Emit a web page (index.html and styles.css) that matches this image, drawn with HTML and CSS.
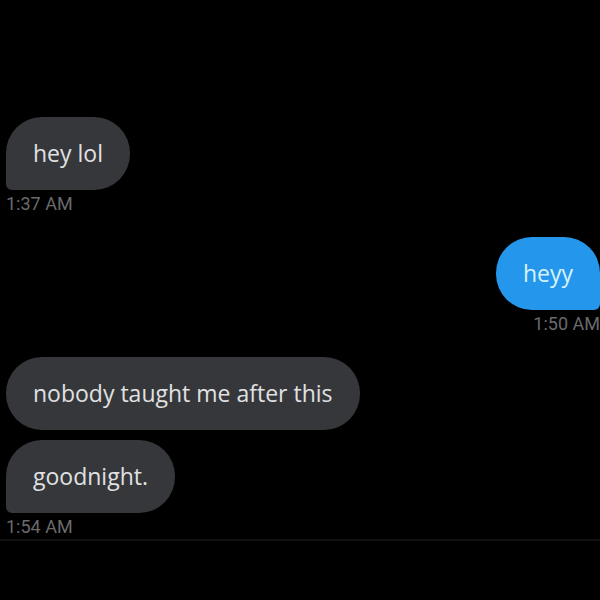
FILE: index.html
```html
<!DOCTYPE html>
<html lang="en">
<head>
<meta charset="utf-8">
<meta name="viewport" content="width=device-width, initial-scale=1">
<title>Messages</title>
<link rel="stylesheet" href="styles.css">
</head>
<body>
<main class="chat">
  <section class="group">
    <p class="bubble tail">hey lol</p>
    <time class="time">1:37 AM</time>
  </section>
  <section class="group sent">
    <p class="bubble tail">heyy</p>
    <time class="time">1:50 AM</time>
  </section>
  <section class="group">
    <p class="bubble">nobody taught me after this</p>
    <p class="bubble tail">goodnight.</p>
    <time class="time">1:54 AM</time>
  </section>
</main>
</body>
</html>
```

FILE: styles.css
```css
body {
  margin: 0;
  background: #000;
  color: #e0e1e3;
  font-family: "Open Sans", sans-serif;
}

.chat {
  display: flex;
  flex-direction: column;
  gap: 22px;
  padding: 117px 0 1px 6px;
  border-bottom: 2px solid #101010;
}

.group {
  display: flex;
  flex-direction: column;
  align-items: flex-start;
}

.sent {
  align-items: flex-end;
}

.bubble {
  margin: 0;
  padding: 20px 27px;
  border-radius: 36px;
  background: #36373a;
  font-size: 23px;
  line-height: 33px;
}

.bubble + .bubble {
  margin-top: 10px;
}

.tail {
  border-bottom-left-radius: 6px;
}

.sent .bubble {
  background: #2497ed;
  color: #d9f3fa;
  border-bottom-left-radius: 36px;
  border-bottom-right-radius: 6px;
}

.time {
  padding-top: 3px;
  color: #696a6c;
  font-family: Roboto, sans-serif;
  font-size: 18px;
  line-height: 22px;
}
```
